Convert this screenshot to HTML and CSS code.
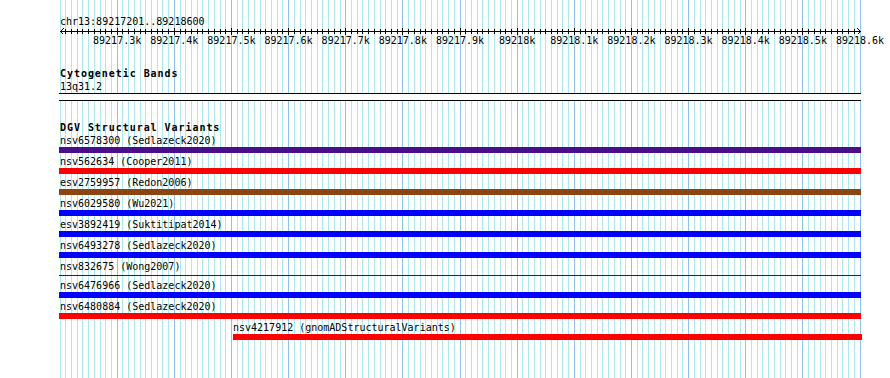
FILE: index.html
```html
<!DOCTYPE html>
<html>
<head>
<link rel="stylesheet" href="styles.css">
</head>
<body>
<div class="browser">
    <div class="ruler">
        <div class="position">chr13:89217201..89218600</div>
        <svg class="scale" id="scale" width="801" height="6"></svg>
        <div class="scale-labels">
            <span>89217.3k</span>
            <span>89217.4k</span>
            <span>89217.5k</span>
            <span>89217.6k</span>
            <span>89217.7k</span>
            <span>89217.8k</span>
            <span>89217.9k</span>
            <span>89218k</span>
            <span>89218.1k</span>
            <span>89218.2k</span>
            <span>89218.3k</span>
            <span>89218.4k</span>
            <span>89218.5k</span>
            <span>89218.6k</span>
        </div>
    </div>

    <div class="track cyto">
        <div class="track-title">Cytogenetic Bands</div>
        <div class="item-label">13q31.2</div>
        <div class="band"></div>
    </div>

    <div class="track dgv">
        <div class="track-title">DGV Structural Variants</div>
        <div class="feature">
            <div class="item-label">nsv6578300 (Sedlazeck2020)</div>
            <div class="bar inversion"></div>
        </div>
        <div class="feature">
            <div class="item-label">nsv562634 (Cooper2011)</div>
            <div class="bar loss"></div>
        </div>
        <div class="feature">
            <div class="item-label">esv2759957 (Redon2006)</div>
            <div class="bar gain-loss"></div>
        </div>
        <div class="feature">
            <div class="item-label">nsv6029580 (Wu2021)</div>
            <div class="bar gain"></div>
        </div>
        <div class="feature">
            <div class="item-label">esv3892419 (Suktitipat2014)</div>
            <div class="bar gain"></div>
        </div>
        <div class="feature">
            <div class="item-label">nsv6493278 (Sedlazeck2020)</div>
            <div class="bar gain"></div>
        </div>
        <div class="feature">
            <div class="item-label">nsv832675 (Wong2007)</div>
            <div class="bar thin"></div>
        </div>
        <div class="feature">
            <div class="item-label">nsv6476966 (Sedlazeck2020)</div>
            <div class="bar gain"></div>
        </div>
        <div class="feature">
            <div class="item-label">nsv6480884 (Sedlazeck2020)</div>
            <div class="bar loss"></div>
        </div>
        <div class="feature partial">
            <div class="item-label">nsv4217912 (gnomADStructuralVariants)</div>
            <div class="bar loss"></div>
        </div>
    </div>
</div>

<script>
// ruler: base line, arrows and a tick every 10 bp
const svg = document.getElementById('scale');
const ns = 'http://www.w3.org/2000/svg';

function draw(tag, attrs) {
    const el = document.createElementNS(ns, tag);
    for (const k in attrs) el.setAttribute(k, attrs[k]);
    svg.appendChild(el);
}

draw('line', { x1: 0, y1: 3.5, x2: 801, y2: 3.5 });
draw('polyline', { points: '3.5,0.5 0.5,3.5 3.5,6.5' });
draw('polyline', { points: '797.5,0.5 800.5,3.5 797.5,6.5' });

for (let k = 1; k < 140; k++) {
    const x = Math.floor(k * 40 / 7) + 0.5;
    const major = k % 10 === 0;
    draw('line', { x1: x, y1: major ? 0 : 1, x2: x, y2: major ? 7 : 6 });
}
</script>
</body>
</html>
```

FILE: styles.css
```css
body {
    margin: 0;
    background: #fff;
    color: #000;
    font-family: "DejaVu Sans Mono", monospace;
    font-size: 10px;
    line-height: 13px;
}

/* grid: light line every 10 bp, blue line every 100 bp */
.browser {
    width: 801px;
    min-height: 378px;
    margin-left: 60px;
    background:
        repeating-linear-gradient(90deg,
            transparent 0 56px, #8ec3ea 56px 57px,
            transparent 57px 113px, #8ec3ea 113px 114px,
            transparent 114px 170px, #8ec3ea 170px 171px,
            transparent 171px 227px, #8ec3ea 227px 228px,
            transparent 228px 284px, #8ec3ea 284px 285px,
            transparent 285px 341px, #8ec3ea 341px 342px,
            transparent 342px 399px, #8ec3ea 399px 400px),
        repeating-linear-gradient(90deg,
            #abe9ef 0 1px, transparent 1px 5px,
            #abe9ef 5px 6px, transparent 6px 11px,
            #abe9ef 11px 12px, transparent 12px 17px,
            #abe9ef 17px 18px, transparent 18px 22px,
            #abe9ef 22px 23px, transparent 23px 28px,
            #abe9ef 28px 29px, transparent 29px 34px,
            #abe9ef 34px 35px, transparent 35px 40px);
    background-size: 800px 100%, 801px 100%;
    background-position: 1px 0, 0 0;
    background-repeat: no-repeat;
}

.ruler {
    padding-top: 15px;
}

.position {
    white-space: nowrap;
}

.scale {
    display: block;
    overflow: visible;
    stroke: #000;
    stroke-width: 1;
    fill: none;
    shape-rendering: crispEdges;
}

.scale-labels {
    display: flex;
    padding-left: 28.57px;
}

.scale-labels span {
    flex: none;
    width: 57.143px;
    text-align: center;
    white-space: nowrap;
}

.track {
    margin-top: 20px;
}

.track-title {
    font-weight: bold;
    letter-spacing: 0.95px;
    white-space: nowrap;
}

.item-label {
    white-space: nowrap;
}

.band {
    box-sizing: border-box;
    width: 802px;
    height: 8px;
    margin-left: -1px;
    border-top: 1px solid #000;
    border-bottom: 1px solid #000;
    background: #fff;
}

.feature + .feature {
    margin-top: 2px;
}

.bar {
    width: 802px;
    height: 6px;
    margin-left: -1px;
}

.bar.inversion { background: #4a0e8a; }
.bar.loss { background: #ff0000; }
.bar.gain { background: #0000ff; }
.bar.gain-loss { background: #8b4513; }

.bar.thin {
    height: 1px;
    margin-top: 2px;
    margin-bottom: 3px;
    background: #0a14c8;
}

.feature.partial {
    margin-left: 173px;
}

.feature.partial .bar {
    width: 629px;
    margin-left: 0;
}
```
